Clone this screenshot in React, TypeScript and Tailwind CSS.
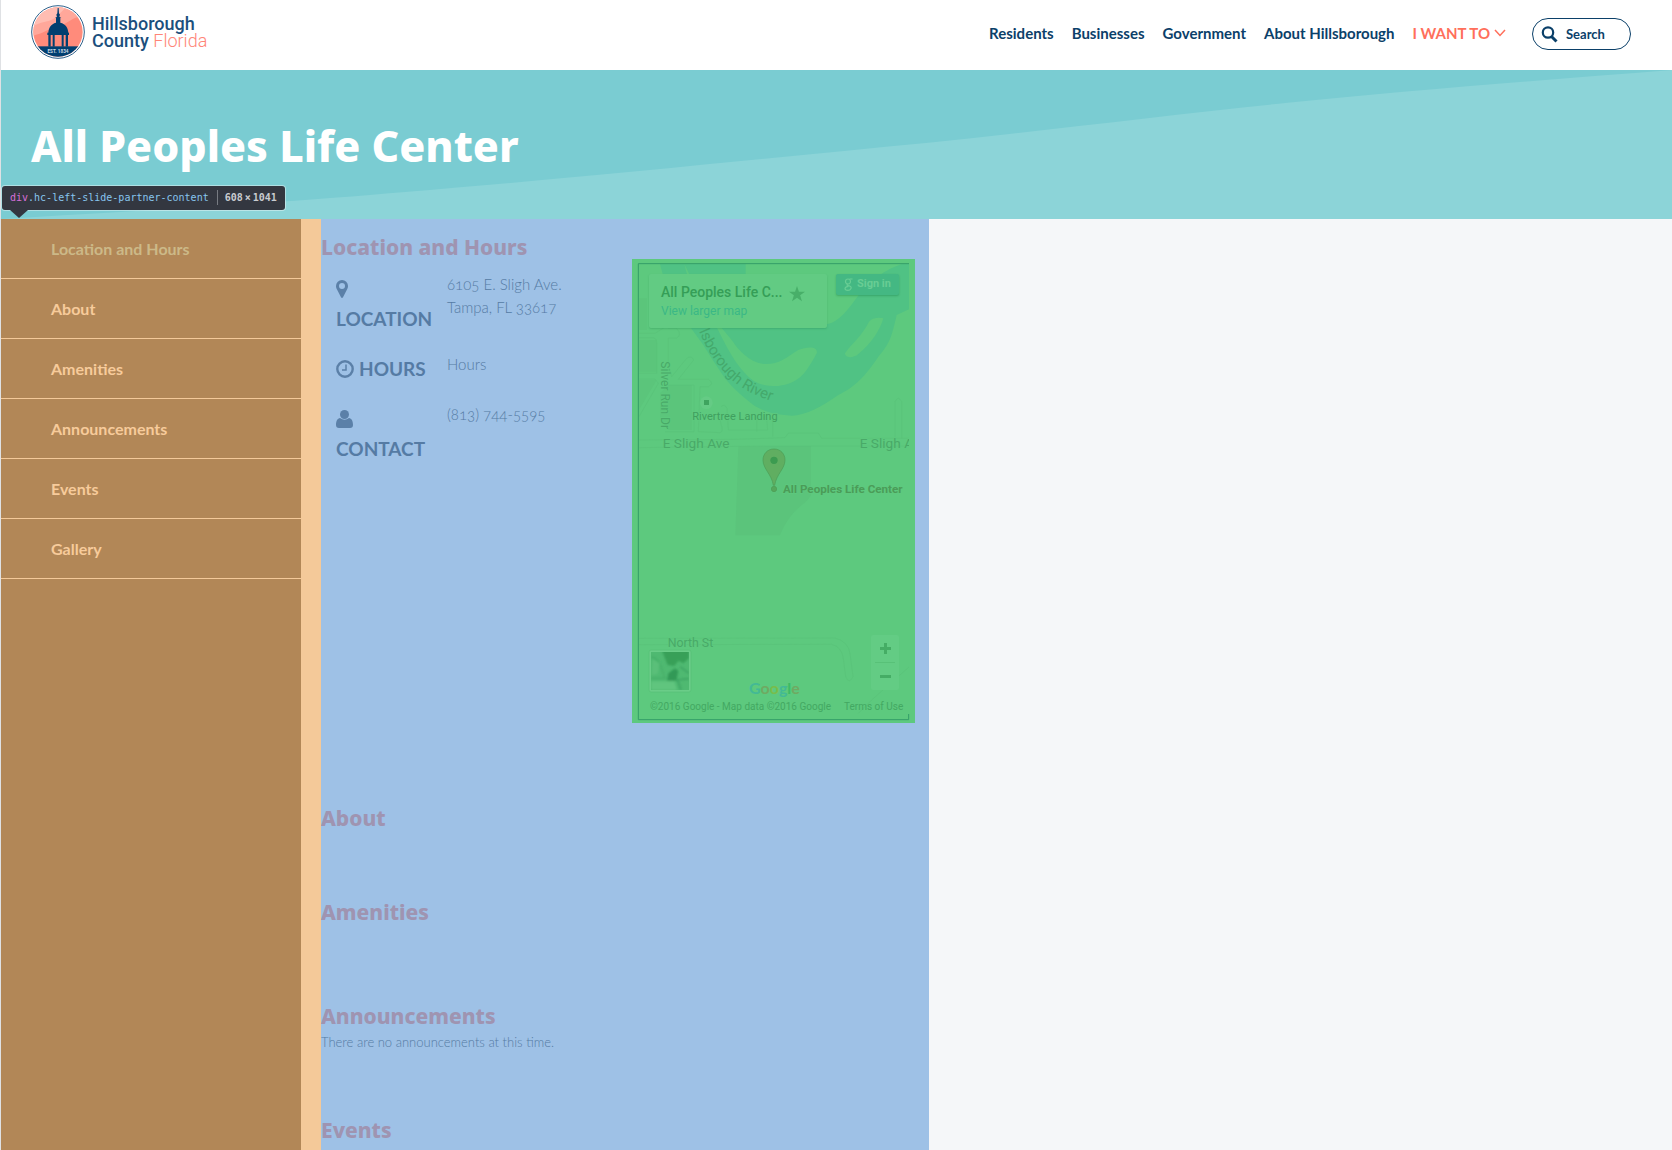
import React from "react";

const navLinks = ["Residents", "Businesses", "Government", "About Hillsborough"];

const sections = ["Location and Hours", "About", "Amenities", "Announcements", "Events", "Gallery"];

function Seal() {
  return (
    <svg width="54" height="56" viewBox="0 0 162 168" aria-hidden="true">
      <defs>
        <clipPath id="seal">
          <circle cx="81" cy="84" r="74" />
        </clipPath>
      </defs>
      <circle cx="81" cy="84" r="79" fill="#fff" stroke="#2f628c" strokeWidth="3" />
      <g clipPath="url(#seal)">
        <rect width="162" height="168" fill="#ff8b7b" />
        <path d="M0 0H162V40C130 30 110 62 75 70C45 78 30 92 0 96Z" fill="#ffa79a" />
        <path d="M0 0H120C90 18 80 44 55 50C35 54 20 58 0 70Z" fill="#ffbdb2" />
        <rect y="127" width="162" height="42" fill="#003f70" />
      </g>
      <g fill="#003f70">
        <path d="M80 12H83L84 28L87 32L85 38L91 42H88V56C104 60 112 72 112 88H52C52 72 60 60 75 56V42H72L78 38L76 32L79 28Z" />
        <rect x="49" y="86" width="65" height="7" />
        <rect x="52" y="92" width="7" height="36" />
        <rect x="65" y="92" width="6" height="36" />
        <rect x="92" y="92" width="6" height="36" />
        <rect x="104" y="92" width="7" height="36" />
      </g>
      <text x="81" y="147" textAnchor="middle" fontSize="14" fontWeight="700" fill="#c9d8e4" fontFamily="Roboto, sans-serif">
        EST. 1834
      </text>
    </svg>
  );
}

function Header() {
  return (
    <header className="flex h-[70px] items-center justify-between bg-white pr-[41px] pl-[30px]">
      <a href="#" className="flex items-center gap-[7px] pb-[6px]">
        <Seal />
        <span className="font-['Roboto'] text-[18px] leading-[17px] font-medium text-[#1b4f7d]">
          Hillsborough
          <br />
          County <span className="font-light text-[#ff8577]">Florida</span>
        </span>
      </a>
      <nav className="flex items-center gap-[18px] pb-0.5 text-[15px] leading-5 font-bold text-[#0b4069]">
        {navLinks.map((label) => (
          <a key={label} href="#" className="pb-0.5">
            {label}
          </a>
        ))}
        <button type="button" className="flex items-center gap-1 pb-0.5 text-[#ff6f5b]">
          I WANT TO
          <svg width="12" height="8" viewBox="0 0 12 8" fill="none" stroke="#ff6f5b" strokeWidth="1.5" aria-hidden="true">
            <path d="M1 1L6 6.5L11 1" />
          </svg>
        </button>
        <button
          type="button"
          className="ml-2 flex h-8 w-[99px] items-center gap-2 rounded-full border border-[#0b4069] pl-2 text-[13px]"
        >
          <svg width="17" height="17" viewBox="0 0 17 17" fill="none" stroke="#0b4069" aria-hidden="true">
            <circle cx="7" cy="6.500" r="5.200" strokeWidth="2.2" />
            <path d="M10.500 10.500L15.500 15.500" strokeWidth="3" />
          </svg>
          Search
        </button>
      </nav>
    </header>
  );
}

function Hero() {
  return (
    <div className="relative h-[149px] bg-[#7accd2] pt-[49px] pl-[30px]">
      <svg className="absolute inset-0 h-full w-full" viewBox="0 0 100 100" preserveAspectRatio="none" aria-hidden="true">
        <path d="M0 100C8 95 18 88 24 82C36 71 45 60 55.500 48.800C63 40 70 30 77 22C84 14 92 7 100 0V100Z" fill="#8cd4d8" />
      </svg>
      <h1 className="relative font-['Noto_Sans'] text-[43px] leading-[54px] font-extrabold text-white">
        All Peoples Life Center
      </h1>
      <div className="absolute bottom-[9px] left-px flex h-6 items-center rounded-[3px] bg-[#333740] px-2 pb-0.5 font-['DejaVu_Sans_Mono'] text-[10px] text-[#c9ccd0] ring-1 ring-white/40">
        <span className="text-[#d66fd8]">div</span>
        <span className="text-[#87c5ee]">.hc-left-slide-partner-content</span>
        <span className="ml-2 flex gap-[2px] border-l border-[#777b82] pl-[7px] font-bold">
          <span>608</span>
          <span>×</span>
          <span>1041</span>
        </span>
        <svg className="absolute top-6 left-2" width="18" height="8" viewBox="0 0 18 8" aria-hidden="true">
          <path d="M0 0H18L9 8Z" fill="#333740" />
        </svg>
      </div>
    </div>
  );
}

function Sidebar() {
  return (
    <nav className="w-75 shrink-0 bg-[#b28757]">
      {sections.map((label, i) => (
        <a
          key={label}
          href="#"
          className={
            "flex h-15 items-center border-b border-[#f4c999] pl-[50px] text-base font-bold " +
            (i === 0 ? "text-[#ccb988]" : "text-[#f7cb9b]")
          }
        >
          {label}
        </a>
      ))}
    </nav>
  );
}

function MapArt() {
  return (
    <svg className="absolute inset-0" width="283" height="464" viewBox="21 27 849 1392" aria-hidden="true">
      <defs>
        <clipPath id="mapArea">
          <rect x="42" y="42" width="810" height="1364" />
        </clipPath>
        <filter id="soft">
          <feGaussianBlur stdDeviation="3" />
        </filter>
      </defs>
      <g clipPath="url(#mapArea)">
        <path d="M42 145H66V240H42ZM42 270H95V365H42ZM42 390H95L42 480ZM130 405H200V540H130L105 500V430Z" fill="#5bc57b" />
        <path d="M340 588H558V735C540 770 500 770 465 856H331Z" fill="#5bc47b" />
        <path
          fillRule="evenodd"
          d="M105 42H362V80L560 200C600 245 640 220 690 150C740 85 780 60 830 42H852V178L815 195C800 260 795 280 760 320C720 380 690 410 640 435C590 470 540 497 500 497C440 495 410 480 385 465C340 430 320 410 300 385C270 340 250 310 235 285L195 230C160 180 120 110 105 42Z M178 42C190 100 220 150 260 200C290 260 320 330 365 375C390 400 410 408 460 408C520 400 540 375 575 310C580 290 550 288 520 300C480 325 460 345 415 342C370 335 340 300 320 270L290 234L230 150Z M775 205C760 200 740 205 732 215C710 260 680 280 660 310C660 325 685 325 700 312C740 280 765 240 775 205Z"
          fill="#50c284"
        />
        <g fill="none" stroke="#59c179" strokeWidth="2">
          <path d="M42 570L330 568L480 563L490 549H580L590 565H852M42 593L420 588H852" />
          <path d="M42 250H90L130 225M42 263H85Q95 265 95 280V370H42M42 387H90L100 400L42 500M130 235H155Q172 255 155 264H130V345L140 380L185 325Q200 315 206 330L160 388H250Q270 400 250 410H225L220 545L285 548Q295 545 290 530L283 500M130 405H207V545H120M288 470Q298 460 306 475L310 540H428L425 505M395 510V545M443 510V560M810 565V455Q820 435 830 455V565" />
          <path d="M42 1165L630 1164Q670 1175 675 1210L684 1280Q672 1305 662 1280L655 1225Q650 1190 620 1183L42 1184" />
          <path d="M852 1251L740 1350L700 1390" />
        </g>
        <circle cx="244" cy="458" r="19" fill="#65cb85" />
        <rect x="237" y="450" width="15" height="15" fill="#3fa45f" />
        <g fill="#49a968" fontFamily="Roboto, sans-serif" stroke="#5dc97e" strokeWidth="4" paintOrder="stroke">
          <path id="river" d="M222 244C255 320 300 380 350 412Q395 442 500 474" fill="none" stroke="none" />
          <text fontSize="45" fill="#44a96c" stroke="#50c284">
            <textPath href="#river">lsborough River</textPath>
          </text>
          <text transform="translate(108 334) rotate(90)" fontSize="36">
            Silver Run Dr
          </text>
          <text x="113" y="594" fontSize="41">
            E Sligh Ave
          </text>
          <text x="704" y="594" fontSize="41">
            E Sligh Ave
          </text>
          <text x="202" y="510" fontSize="33" fill="#409f5e">
            Rivertree Landing
          </text>
          <text x="128" y="1190" fontSize="37">
            North St
          </text>
          <text x="474" y="730" fontSize="35" fontWeight="700" fill="#4b9c58">
            All Peoples Life Center
          </text>
        </g>
        <path
          d="M447 597C427 597 414 612 414 630C414 657 440 672 445 706H449C454 672 480 657 480 630C480 612 467 597 447 597Z"
          fill="#60ae61"
          stroke="#4b9b55"
          strokeWidth="2"
        />
        <circle cx="447" cy="631" r="11" fill="#3c9b50" />
        <circle cx="447" cy="717" r="8" fill="#55a75b" stroke="#4b9b55" strokeWidth="2" />
      </g>
      <path d="M852 41H40V1409H851V1392" fill="none" stroke="#339d68" strokeWidth="3" />
      <rect x="72" y="1200" width="126" height="126" rx="6" fill="#6acd88" stroke="#56be76" strokeWidth="2" />
      <svg x="78" y="1206" width="114" height="114" viewBox="78 1206 114 114">
        <rect x="78" y="1206" width="114" height="114" fill="#4fb971" />
        <g filter="url(#soft)" fill="none">
          <path d="M110 1200H192V1225L175 1240L160 1232L148 1248L128 1245Z" fill="#37a059" />
          <path d="M130 1270L150 1255L160 1262L154 1292H126Z" fill="#309956" />
          <path d="M78 1220Q100 1225 108 1250L120 1285H78" stroke="#46af69" strokeWidth="5" />
          <path d="M165 1250L192 1270M154 1290L192 1286M158 1290L168 1320" stroke="#3da463" strokeWidth="5" />
          <path d="M82 1228L104 1240L98 1272L80 1276Z" fill="#5abf79" />
          <path d="M78 1294H148L156 1320H78Z" fill="#60c57e" />
        </g>
      </svg>
    </svg>
  );
}

function MapEmbed() {
  return (
    <div className="relative mt-10 mr-[14px] h-[464px] w-[283px] shrink-0 overflow-hidden bg-[#5dc97e] font-['Roboto']">
      <MapArt />
      <div className="absolute top-[15px] left-[17px] h-[54px] w-[178px] rounded-xs bg-[#62cb83] pt-[9px] pl-3 shadow-xs shadow-green-800/20">
        <div className="text-sm leading-[18px] font-medium text-[#359e57]">All Peoples Life C...</div>
        <a href="#" className="block text-[12px] leading-5 text-[#3bb886]">
          View larger map
        </a>
        <svg className="absolute top-3 right-[22px]" width="16" height="16" viewBox="0 0 24 24" fill="#48af69" aria-hidden="true">
          <path d="M12 0L14.900 8.600H24L16.700 13.900L19.400 23L12 17.500L4.600 23L7.300 13.900L0 8.600H9.100Z" />
        </svg>
      </div>
      <button
        type="button"
        className="absolute top-[15px] left-[204px] flex h-[21px] w-[63px] items-center gap-1 rounded-xs bg-[#44b883] pl-2 text-[11px] font-bold text-[#68cd94] shadow-xs shadow-green-800/30"
      >
        <svg width="9" height="13" viewBox="0 0 9 13" fill="none" stroke="#68cd94" strokeWidth="1.2" aria-hidden="true">
          <circle cx="4" cy="3.500" r="2.500" />
          <path d="M5.500 1H8.500M4 6Q2 7 4 7.500Q8 8.500 7 10.500Q6 12.400 4 12.400Q1 12.200 1 10.400Q1.500 8.500 4.500 8.300" />
        </svg>
        Sign in
      </button>
      <div className="absolute top-[376px] left-[239px] flex w-7 flex-col items-center rounded-xs bg-[#63cc84] px-1">
        <button type="button" aria-label="Zoom in" className="flex h-[27px] w-full items-center justify-center">
          <svg width="11" height="11" viewBox="0 0 11 11" stroke="#45ad65" strokeWidth="3" aria-hidden="true">
            <path d="M5.500 0V11M0 5.500H11" />
          </svg>
        </button>
        <button type="button" aria-label="Zoom out" className="flex h-7 w-full items-center justify-center border-t border-[#58c178]">
          <svg width="11" height="3" viewBox="0 0 11 3" stroke="#45ad65" strokeWidth="3" aria-hidden="true">
            <path d="M0 1.500H11" />
          </svg>
        </button>
      </div>
      <div className="absolute top-[419px] left-[117px] font-['Lato'] text-base leading-5 font-bold">
        <span className="text-[#43b995]">G</span>
        <span className="text-[#6faa62]">o</span>
        <span className="text-[#78bd4c]">o</span>
        <span className="text-[#43b995]">g</span>
        <span className="text-[#3cbb65]">l</span>
        <span className="text-[#6faa62]">e</span>
      </div>
      <div className="absolute top-[442px] left-[18px] flex gap-[13px] text-[10px] leading-3 whitespace-nowrap text-[#43a862]">
        <span>©2016 Google - Map data ©2016 Google</span>
        <a href="#">Terms of Use</a>
      </div>
    </div>
  );
}

function PinIcon() {
  return (
    <svg width="12" height="18" viewBox="0 0 12 18" fill="#5b80a8" aria-hidden="true">
      <path
        fillRule="evenodd"
        d="M6 0A6 6 0 0 0 0 6C0 7.600.500 8.500 1 9.500L5 17.300Q6 18.500 7 17.300L11 9.500C11.500 8.500 12 7.600 12 6A6 6 0 0 0 6 0ZM6 3A3 3 0 1 1 6 9A3 3 0 0 1 6 3Z"
      />
    </svg>
  );
}

function ClockIcon() {
  return (
    <svg width="18" height="18" viewBox="0 0 18 18" fill="none" stroke="#5b80a8" aria-hidden="true">
      <circle cx="9" cy="9" r="7.700" strokeWidth="2.400" />
      <path d="M10 4.500V10H6" strokeWidth="1.500" />
    </svg>
  );
}

function PersonIcon() {
  return (
    <svg width="17" height="18" viewBox="0 0 17 18" fill="#5b80a8" aria-hidden="true">
      <circle cx="8.500" cy="4.500" r="4.500" />
      <path d="M4 8C1.500 8.300 0 11 0 15Q0 18 3 18H14Q17 18 17 15C17 11 15.500 8.300 13 8Q8.500 11.500 4 8Z" />
    </svg>
  );
}

const labelClass = "w-[111px] shrink-0 pt-px text-[19px] leading-[30px] font-bold";
const valueClass = "text-[15px] leading-[23px] font-light oldstyle-nums";
const headingClass = "font-['Noto_Sans'] text-[21px] leading-8 font-extrabold text-[#9f94b1]";

function Content() {
  return (
    <main className="w-[608px] max-w-full bg-[#9ec1e6] text-[#557ba4]">
      <section className="flex justify-between pb-[79px]">
        <div className="pt-3">
          <h2 className={headingClass}>Location and Hours</h2>
          <dl className="mt-[10px] flex flex-col gap-[19px] pl-[15px]">
            <div className="flex">
              <dt className={labelClass}>
                <span className="flex h-[30px] items-center">
                  <PinIcon />
                </span>
                LOCATION
              </dt>
              <dd className={valueClass}>
                6105 E. Sligh Ave.
                <br />
                Tampa, FL 33617
              </dd>
            </div>
            <div className="flex">
              <dt className={labelClass}>
                <span className="flex items-center gap-[5px]">
                  <ClockIcon />
                  HOURS
                </span>
              </dt>
              <dd className={valueClass}>Hours</dd>
            </div>
            <div className="flex">
              <dt className={labelClass}>
                <span className="flex h-[30px] items-center">
                  <PersonIcon />
                </span>
                CONTACT
              </dt>
              <dd className={valueClass}>(813) 744-5595</dd>
            </div>
          </dl>
        </div>
        <MapEmbed />
      </section>
      <section className="pb-[62px]">
        <h2 className={headingClass}>About</h2>
      </section>
      <section className="pb-[72px]">
        <h2 className={headingClass}>Amenities</h2>
      </section>
      <section className="pb-[62px]">
        <h2 className={headingClass}>Announcements</h2>
        <p className="text-[13px] leading-5 font-light">There are no announcements at this time.</p>
      </section>
      <section>
        <h2 className={headingClass}>Events</h2>
      </section>
    </main>
  );
}

export default function App() {
  return (
    <div className="flex min-h-screen flex-col border-l border-[#dfe1e4] bg-[#f5f7f9] font-['Lato',sans-serif]">
      <Header />
      <Hero />
      <div className="flex grow">
        <Sidebar />
        <div className="w-5 shrink-0 bg-[#f4c999]" />
        <Content />
      </div>
    </div>
  );
}
